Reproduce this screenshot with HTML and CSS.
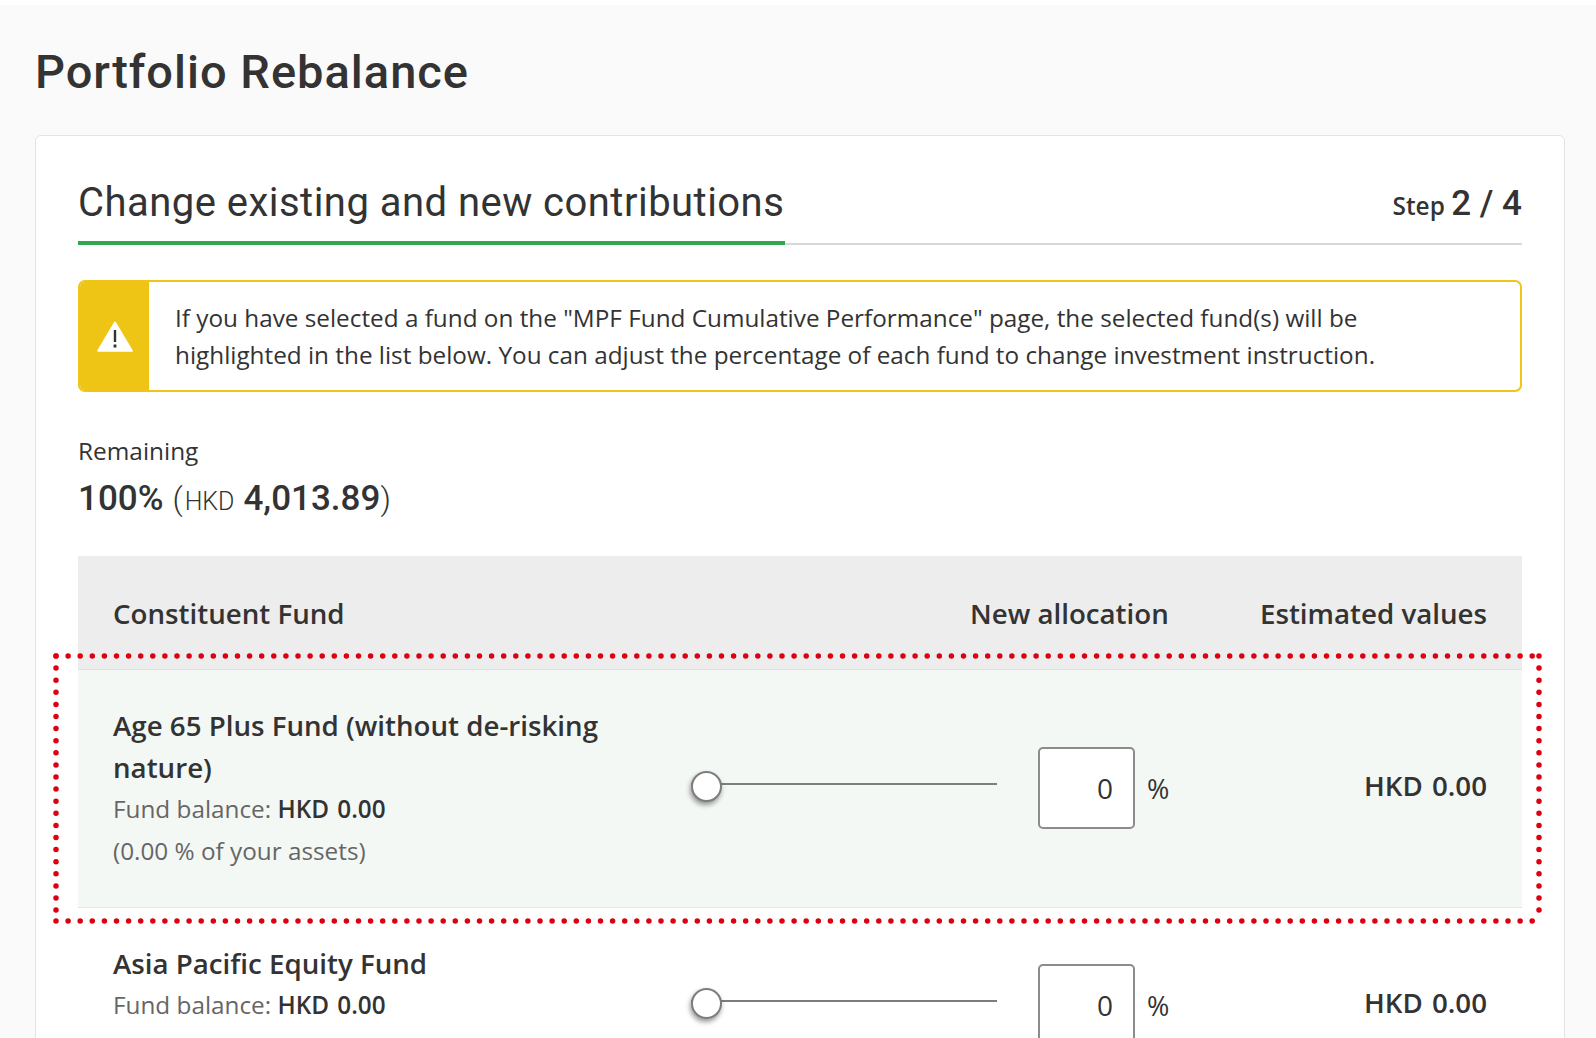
FILE: index.html
```html
<!DOCTYPE html>
<html lang="en">
<head>
<meta charset="utf-8">
<title>Portfolio Rebalance</title>
<link rel="stylesheet" href="styles.css">
</head>
<body>
<main class="page">
  <h1 class="page-title">Portfolio Rebalance</h1>
  <section class="card">
    <header class="step-head">
      <h2 class="step-title">Change existing and new contributions</h2>
      <p class="step-count">Step <strong>2 / 4</strong></p>
    </header>

    <div class="alert">
      <div class="alert-icon">
        <svg width="36" height="31" viewBox="0 0 36 31" aria-hidden="true">
          <path class="tri" d="M18 1.5 L34.8 29.8 H1.2 Z"/>
          <rect class="mark" x="16.8" y="9" width="2.4" height="12"/>
          <rect class="mark" x="16.6" y="23.5" width="2.8" height="3"/>
        </svg>
      </div>
      <p class="alert-text">If you have selected a fund on the "MPF Fund Cumulative Performance" page, the selected fund(s) will be highlighted in the list below. You can adjust the percentage of each fund to change investment instruction.</p>
    </div>

    <div class="remaining">
      <div class="remaining-label">Remaining</div>
      <div class="remaining-value"><b>100%</b> <span class="paren">(</span><span class="cur">HKD</span> <b>4,013.89</b><span class="paren">)</span></div>
    </div>

    <div class="table">
      <div class="row head-row">
        <div class="col-fund">Constituent Fund</div>
        <div class="col-alloc">New allocation</div>
        <div class="col-value">Estimated values</div>
      </div>

      <div class="row fund-row highlighted">
        <div class="col-fund">
          <div class="fund-name">Age 65 Plus Fund (without de-risking nature)</div>
          <div class="fund-meta">Fund balance: <b class="amt">HKD&nbsp;0.00</b></div>
          <div class="fund-meta">(0.00 % of your assets)</div>
        </div>
        <div class="slider"><span class="thumb"></span></div>
        <div class="alloc"><span class="input">0</span><span class="pct">%</span></div>
        <div class="col-value amount">HKD 0.00</div>
      </div>

      <div class="row fund-row">
        <div class="col-fund">
          <div class="fund-name">Asia Pacific Equity Fund</div>
          <div class="fund-meta">Fund balance: <b class="amt">HKD&nbsp;0.00</b></div>
          <div class="fund-meta">(0.00 % of your assets)</div>
        </div>
        <div class="slider"><span class="thumb"></span></div>
        <div class="alloc"><span class="input">0</span><span class="pct">%</span></div>
        <div class="col-value amount">HKD 0.00</div>
      </div>
    </div>
  </section>
</main>
<svg class="callout" width="1596" height="1038" viewBox="0 0 1596 1038" aria-hidden="true">
  <path d="M56 656 H1539"/>
  <path d="M1539 656 V921"/>
  <path d="M56 921 H1539"/>
  <path d="M56 656 V921"/>
</svg>
</body>
</html>
```

FILE: styles.css
```css
* { box-sizing: border-box; }
html, body { margin: 0; height: 100%; overflow: hidden; background: #fff; }
body {
  font-family: "Open Sans", "Liberation Sans", sans-serif;
  color: #333;
  padding-top: 5px;
}
.page {
  background: #fafafa;
  height: 1033px;
  padding: 0 31px 0 35px;
  overflow: hidden;
}
.page-title {
  margin: 0;
  padding-top: 34px;
  height: 130px;
  font: 500 47px/66px Roboto, sans-serif;
  letter-spacing: 1px;
  color: #333;
}
.card {
  background: #fff;
  border: 1px solid #e4e4e4;
  border-radius: 6px;
  padding: 30px 42px 0;
  height: 1000px;
}
.step-head {
  display: flex;
  justify-content: space-between;
  align-items: flex-end;
  height: 79px;
  border-bottom: 2px solid #d9d9d9;
}
.step-title {
  margin: 0 0 -2px;
  width: 707px;
  height: 79px;
  padding-top: 12px;
  font: 400 40px/50px Roboto, sans-serif;
  letter-spacing: .47px;
  color: #333;
  border-bottom: 4px solid #2fa84f;
  white-space: nowrap;
}
.step-count {
  margin: 0;
  font-size: 24.4px;
  font-weight: 600;
  line-height: 50px;
  padding: 0 0 12px 0;
  color: #333;
}
.step-count strong {
  font: 500 35px/50px Roboto, sans-serif;
}
.alert {
  display: flex;
  margin-top: 35px;
  height: 112px;
  border: 2px solid #f0c517;
  border-radius: 7px;
  overflow: hidden;
}
.alert-icon {
  flex: 0 0 69px;
  background: #eec515;
  display: flex;
  align-items: center;
  justify-content: center;
}
.tri { fill: #fff; stroke: #fff; stroke-width: 2; stroke-linejoin: round; }
.mark { fill: #333; }
.alert-text {
  flex: 1;
  margin: 0;
  padding: 17px 100px 0 26px;
  font-size: 24.3px;
  line-height: 37px;
  color: #333;
}
.remaining { margin-top: 40px; }
.remaining-label { font-size: 24.4px; line-height: 38px; }
.remaining-value {
  font: 400 24px/50px Roboto, sans-serif;
  margin-top: 4px;
}
.remaining-value b { font-weight: 500; font-size: 35px; }
.paren { font-size: 32px; font-weight: 300; }
.paren:first-of-type { margin-left: 3px; }
.cur { font-size: 25px; font-weight: 300; margin: 0 3px 0 2px; }
.table { margin-top: 29px; }
.row { display: flex; padding: 0 35px; }
.head-row {
  height: 114px;
  background: #ededed;
  border-bottom: 1px solid #dde2e6;
  align-items: center;
  font-size: 27.7px;
  font-weight: 600;
  color: #333;
  white-space: nowrap;
}
.head-row .col-fund { flex: 1; }
.head-row .col-alloc { width: 198px; text-align: right; }
.col-value { width: 319px; text-align: right; }
.fund-row {
  align-items: center;
  padding-top: 34px;
  padding-bottom: 35px;
  border-bottom: 1px solid #e6e6e6;
}
.highlighted { background: #f4f8f5; }
.fund-row .col-fund { width: 578px; flex: none; padding-right: 50px; }
.fund-name { font-size: 27.7px; font-weight: 600; line-height: 42px; color: #333; }
.fund-meta { font-size: 24.3px; line-height: 42px; color: #666; }
.amt { font-weight: 600; color: #333; word-spacing: 2px; }
.slider {
  position: relative;
  width: 306px;
  height: 2px;
  background: #7d7d7d;
  margin-right: 41px;
  margin-top: -8px;
  flex: none;
}
.thumb {
  position: absolute;
  left: 0;
  top: -12px;
  width: 31px;
  height: 31px;
  background: #fff;
  border: 2px solid #7d7d7d;
  border-radius: 50%;
  box-shadow: -1px 3px 5px rgba(0,0,0,.4);
}
.alloc { display: flex; align-items: center; flex: none; }
.input {
  display: block;
  width: 97px;
  height: 82px;
  background: #fff;
  border: 2px solid #8c8c8c;
  border-radius: 5px;
  font-size: 28px;
  line-height: 78px;
  text-align: right;
  padding-right: 20px;
  color: #333;
}
.pct { margin-left: 12px; font-size: 27px; color: #333; }
.amount { flex: 1; font-size: 27.7px; font-weight: 600; margin-top: -7px; word-spacing: 2px; }
.callout {
  position: absolute;
  left: 0;
  top: 0;
  pointer-events: none;
}
.callout path {
  fill: none;
  stroke: #dc0010;
  stroke-width: 5.5;
  stroke-linecap: round;
  stroke-dasharray: 0 12.1;
}
```
